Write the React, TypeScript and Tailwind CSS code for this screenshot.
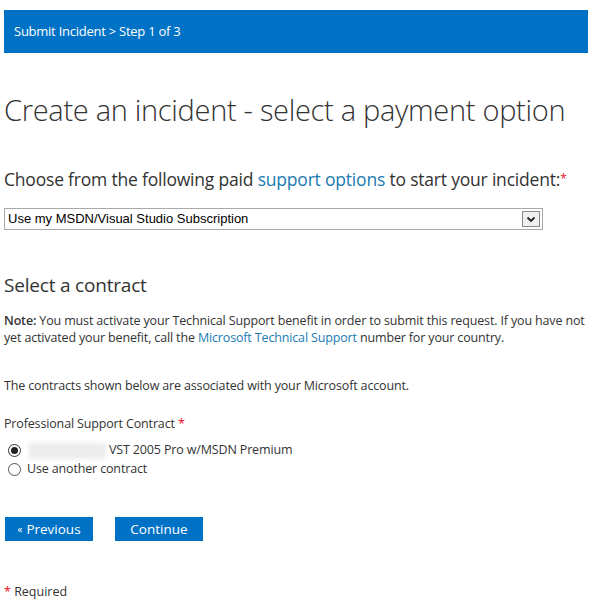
import React from 'react';

const font = { fontFamily: '"Segoe UI", "Open Sans", "Noto Sans", sans-serif' };

export default function App() {
  return (
    <div className="w-[596px] h-[600px] bg-white text-[#2a2a2a] overflow-hidden" style={font}>
      <div className="pt-[10px] px-[4px] pr-[8px]">
        <div className="h-[43px] bg-[#0072c6] flex items-center px-[10px] text-white text-[13px] tracking-[-0.25px]">
          Submit Incident &gt; Step 1 of 3
        </div>
      </div>

      <div className="px-[4px]">
        <h1 className="mt-[39px] text-[29px] font-light leading-[36px] tracking-[-0.3px] text-[#333]">
          Create an incident - select a payment option
        </h1>

        <p className="mt-[39px] text-[17.5px] leading-[24px] tracking-[-0.2px] text-[#333]">
          Choose from the following paid <span className="text-[#1a7bb1]">support options</span> to start your incident:
          <span className="text-[#e81123] text-[12px] align-top">*</span>
        </p>

        <div className="mt-[17px] w-[539px] h-[22px] border border-[#a9a9a9] flex items-center justify-between pl-[3px] pr-[2px]" style={{ fontFamily: '"Liberation Sans", Arial, sans-serif' }}>
          <span className="text-[13px] text-black">Use my MSDN/Visual Studio Subscription</span>
          <span className="w-[18px] h-[16px] border border-[#888] bg-[#f0f0f0] flex items-center justify-center">
            <svg width="10" height="7" viewBox="0 0 10 7"><path d="M1.5 1.5 L5 5 L8.5 1.5" stroke="#222" strokeWidth="1.8" fill="none" /></svg>
          </span>
        </div>

        <h2 className="mt-[42px] text-[19px] leading-[26px] tracking-[-0.2px] text-[#333]">Select a contract</h2>

        <p className="mt-[14px] text-[12.5px] leading-[17px] tracking-[-0.15px] text-[#333]">
          <b className="font-semibold">Note:</b> You must activate your Technical Support benefit in order to submit this request. If you have not yet activated your benefit, call the <span className="text-[#1a7bb1]">Microsoft Technical Support</span> number for your country.
        </p>

        <p className="mt-[31px] text-[12.5px] leading-[17px] tracking-[-0.15px] text-[#333]">
          The contracts shown below are associated with your Microsoft account.
        </p>

        <p className="mt-[21px] text-[12.5px] leading-[17px] tracking-[-0.15px] text-[#333]">
          Professional Support Contract <span className="text-[#e81123]">*</span>
        </p>

        <div className="mt-[9px] flex flex-col text-[12.5px] tracking-[-0.15px] text-[#333]">
          <div className="flex items-center h-[19px]">
            <span className="ml-[4px] w-[13px] h-[13px] rounded-full border border-[#333] flex items-center justify-center">
              <span className="w-[7px] h-[7px] rounded-full bg-[#222]" />
            </span>
            <span className="ml-[8px] w-[77px] h-[16px] bg-[#ececec] blur-[2px]" />
            <span className="ml-[3px]">VST 2005 Pro w/MSDN Premium</span>
          </div>
          <div className="flex items-center h-[19px]">
            <span className="ml-[4px] w-[13px] h-[13px] rounded-full border border-[#555]" />
            <span className="ml-[6px]">Use another contract</span>
          </div>
        </div>

        <div className="mt-[38px] flex gap-[22px]">
          <button className="w-[88px] h-[24px] ml-[1px] bg-[#0072c6] text-white text-[13.5px] flex items-center justify-center">
            <span className="text-[10px] mr-[4px]">«</span>Previous
          </button>
          <button className="w-[88px] h-[24px] bg-[#0072c6] text-white text-[13.5px] flex items-center justify-center">
            Continue
          </button>
        </div>

        <p className="mt-[42px] text-[12.5px] leading-[17px] text-[#333]">
          <span className="text-[#e81123]">*</span> Required
        </p>
      </div>
    </div>
  );
}
